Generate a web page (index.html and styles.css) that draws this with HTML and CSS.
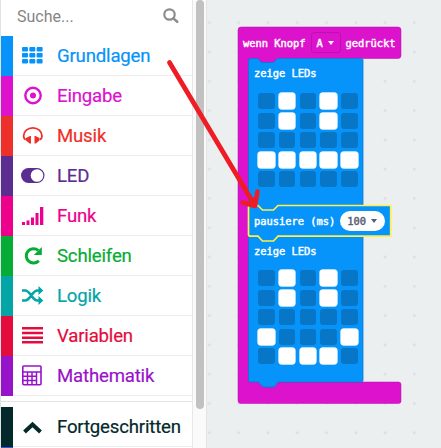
FILE: index.html
```html
<!DOCTYPE html>
<html lang="de">
<head>
<meta charset="utf-8">
<title>Editor</title>
<link rel="stylesheet" href="styles.css">
</head>
<body>
<div class="editor">
  <aside class="toolbox">
    <div class="search"><span>Suche...</span>
      <svg width="16" height="16" viewBox="0 0 16 16" fill="none" stroke="#8c8c8c"><circle cx="6.5" cy="6.5" r="5.2" stroke-width="2.2"/><path d="M10.4 10.4L14.2 13.8" stroke-width="2.5" stroke-linecap="round"/></svg>
    </div>
    <div class="row basic"><i></i><svg viewBox="0 0 24 24" fill="currentColor"><rect x="1" y="3" width="6" height="4.500" rx="1"/><rect x="8.300" y="3" width="6" height="4.500" rx="1"/><rect x="15.600" y="3" width="6" height="4.500" rx="1"/><rect x="1" y="9" width="6" height="4.500" rx="1"/><rect x="8.300" y="9" width="6" height="4.500" rx="1"/><rect x="15.600" y="9" width="6" height="4.500" rx="1"/><rect x="1" y="15" width="6" height="4.500" rx="1"/><rect x="8.300" y="15" width="6" height="4.500" rx="1"/><rect x="15.600" y="15" width="6" height="4.500" rx="1"/></svg><span>Grundlagen</span></div>
    <div class="row input"><i></i><svg viewBox="0 0 24 24"><circle cx="12" cy="11.500" r="7.700" fill="none" stroke="currentColor" stroke-width="2.400"/><circle cx="12" cy="11.500" r="3" fill="currentColor"/></svg><span>Eingabe</span></div>
    <div class="row music"><i></i><svg viewBox="0 0 24 24" fill="currentColor"><path d="M4.700 15.800C2.800 14.500 2.600 13 2.600 12A9.200 8.200 0 0 1 21 12C21 13 20.800 14.500 18.900 15.800" fill="none" stroke="currentColor" stroke-width="1.800"/><path d="M5 14L9 12h1v7.500H8.600L5 16.500zM18.500 14L14.500 12h-1v7.500h1.400L18.500 16.500z"/></svg><span>Musik</span></div>
    <div class="row led"><i></i><svg viewBox="0 0 24 24"><rect x="0" y="4" width="23.500" height="15" rx="7.500" fill="currentColor"/><circle cx="16" cy="11.500" r="6.300" fill="#fff"/></svg><span>LED</span></div>
    <div class="row radio"><i></i><svg viewBox="0 0 24 24" fill="currentColor"><path d="M1 18h3v3H1zM5.500 16.500h3V21h-3zM10 13.500h3V21h-3zM14.500 9h3v12h-3zM19 3h3.300v18H19z"/></svg><span>Funk</span></div>
    <div class="row loops"><i></i><svg viewBox="0 0 24 24"><path d="M17.800 16.700A7.200 7.200 0 1 1 17.300 6.500" fill="none" stroke="currentColor" stroke-width="3"/><path d="M20.800 3v8h-8z" fill="currentColor"/></svg><span>Schleifen</span></div>
    <div class="row logic"><i></i><svg viewBox="0 0 24 24"><path d="M1 6.500H4C9.500 6.500 11 16.500 16.500 16.500h2.500M1 16.500h3C9.500 16.500 11 6.500 16.500 6.500h2.500" fill="none" stroke="currentColor" stroke-width="2.600"/><path d="M17.500 2L22.300 6.500l-4.800 4.500zM17.500 12l4.800 4.500-4.800 4.500z" fill="currentColor"/></svg><span>Logik</span></div>
    <div class="row variables"><i></i><svg viewBox="0 0 24 24" fill="currentColor"><path d="M1 3h21v2.500H1zM1 7.700h21v2.500H1zM1 12.400h21v2.500H1zM1 17.100h21v2.500H1z"/></svg><span>Variablen</span></div>
    <div class="row math"><i></i><svg viewBox="0 0 24 24" fill="none" stroke="currentColor"><rect x="1.800" y="2" width="18.200" height="18.700" rx="1" stroke-width="1.600"/><path d="M2 8h18M2 12.200h14M2 16.400h14M6.500 8v12.500M11 8v12.500M15.500 8v12.500" stroke-width="1.500"/></svg><span>Mathematik</span></div>
    <div class="divider"></div>
    <div class="row advanced"><i></i><svg viewBox="0 0 24 24"><path d="M3.500 17l8-7.500 8 7.500" fill="none" stroke="currentColor" stroke-width="4"/></svg><span>Fortgeschritten</span></div>
    <div class="row next"><i></i></div>
  </aside>
  <div class="track"><div class="thumb"></div></div>
  <main class="workspace">
    <div class="stack">
      <svg class="shapes" width="170" height="384" viewBox="236 24 170 384">
        <path d="M241 27H398a3 3 0 0 1 3 3V55.500a3 3 0 0 1-3 3H280V64H249V382H398.500a2.500 2.500 0 0 1 2.500 2.500V401a2.500 2.500 0 0 1-2.500 2.500H241a3 3 0 0 1-3-3V30a3 3 0 0 1 3-3z" fill="#dc12cd" stroke="#b010a4" stroke-width=".5"/>
        <path d="M251 58.500H258l3.500 4h12l4-4H361.500a1.500 1.500 0 0 1 1.500 1.500V380.500a1.500 1.500 0 0 1-1.500 1.500H278l-2 3q-1 2-3 2H264q-2 0-3-2l-2.500-3H250.500a2 2 0 0 1-2-2V61a2.500 2.500 0 0 1 2.500-2.500z" fill="#0694fa" stroke="#0878cb" stroke-width=".8"/>
        <path d="M250.500 205.500H258l4.500 4.500h11l4.500-4.500H390.700V236.200H278l-4.500 4.800h-11l-4.500-4.800H250.500q-2 0-2-2V207.500q0-2 2-2z" fill="#0694fa" stroke="#fff04a" stroke-width="1.700"/>
      </svg>
      <div class="content">
        <div class="event"><span>wenn Knopf</span><span class="select">A<b></b></span><span>gedrückt</span></div>
        <div class="label">zeige LEDs</div>
        <div class="grid">
          <i></i><i class="on"></i><i></i><i class="on"></i><i></i>
          <i></i><i class="on"></i><i></i><i class="on"></i><i></i>
          <i></i><i></i><i></i><i></i><i></i>
          <i class="on"></i><i class="on"></i><i class="on"></i><i class="on"></i><i class="on"></i>
          <i></i><i></i><i></i><i></i><i></i>
        </div>
        <div class="pause"><span>pausiere (ms)</span><span class="value">100<b></b></span></div>
        <div class="label second">zeige LEDs</div>
        <div class="grid">
          <i></i><i class="on"></i><i></i><i class="on"></i><i></i>
          <i></i><i class="on"></i><i></i><i class="on"></i><i></i>
          <i></i><i></i><i></i><i></i><i></i>
          <i class="on"></i><i></i><i></i><i></i><i class="on"></i>
          <i></i><i class="on"></i><i class="on"></i><i class="on"></i><i></i>
        </div>
      </div>
    </div>
  </main>
  <svg class="arrow" width="441" height="448" viewBox="0 0 441 448" fill="none" stroke="#ee1c24" stroke-linecap="round" stroke-linejoin="round"><path d="M169.500 62.500L254 204" stroke-width="4.800"/><path d="M242.500 202.500L255 206L257.500 191.500" stroke-width="4.500"/><path d="M248 203l6-5 1 7z" fill="#ee1c24" stroke-width="2"/></svg>
</div>
</body>
</html>
```
FILE: styles.css
```css
* { box-sizing: border-box; }
body { margin: 0; }
.editor {
  position: relative;
  display: flex;
  width: 441px;
  height: 448px;
  overflow: hidden;
  background: #ebeff0;
  font-family: Roboto, sans-serif;
}
.toolbox {
  width: 193px;
  height: 448px;
  overflow: hidden;
  background: #fff;
  border-left: 1px solid #dfe5e6;
  border-right: 1px solid #e8e8ea;
}
.search {
  display: flex;
  align-items: center;
  justify-content: space-between;
  height: 36px;
  padding: 0 13px 4px 16px;
  color: #858585;
  font-size: 16px;
}
.row {
  display: flex;
  align-items: center;
  height: 40px;
  background: linear-gradient(#ecedee, #ecedee) 0 39px / 100% 1px no-repeat;
  font-size: 18.6px;
  letter-spacing: -.18px;
  line-height: 24px;
  white-space: nowrap;
}
.row i {
  flex: none;
  width: 12px;
  height: 40px;
  background: currentColor;
}
.row svg { flex: none; width: 24px; height: 24px; margin: 0 12px 0 8px; }
.row span { -webkit-text-stroke: .2px currentColor; }
.basic { color: #0694fa; }
.input { color: #dc12cd; }
.music { color: #ee302b; }
.led { color: #5c2d91; }
.radio { color: #ed008c; }
.loops { color: #05ac35; }
.logic { color: #03a5a7; }
.variables { color: #e30c3d; }
.math { color: #9713c9; }
.advanced { color: #03292b; }
.next { color: #3455db; }
.divider { height: 11px; background: linear-gradient(#e2e3e4, #e2e3e4) 0 5px / 100% 1px no-repeat; }
.track {
  width: 14px;
  padding: 0 3px;
  background: #fafafa;
  border-right: 1px solid #e0e4e5;
}
.thumb { width: 8px; height: 409px; border-radius: 4px; background: #c1c1c1; }
.workspace {
  flex: 1;
  padding: 24px 0 0 29px;
  background: radial-gradient(circle, #dce0e2 0 1.2px, transparent 1.8px) 17px 8px / 29.3px 29.3px #ebeff0;
}
.stack { position: relative; width: 170px; height: 384px; }
.shapes { position: absolute; inset: 0; }
.content {
  position: relative;
  padding-top: 3px;
  color: #fff;
  font: 10.4px/14px "DejaVu Sans Mono", monospace;
  -webkit-text-stroke: .45px currentColor;
  white-space: nowrap;
}
.event { display: flex; align-items: center; height: 31px; padding-left: 7px; }
.select {
  display: flex;
  align-items: center;
  gap: 5px;
  width: 30px;
  height: 21px;
  margin: 0 5px 0 5px;
  padding-left: 5px;
  border: 1px solid #bb12ae;
  border-radius: 3px;
}
b { border: 3.6px solid transparent; border-top: 4px solid currentColor; border-bottom: 0; }
.label { height: 35px; padding: 8px 0 0 18px; }
.grid {
  display: grid;
  grid-template-columns: repeat(5, 16.5px);
  grid-auto-rows: 16px;
  gap: 3.5px 4.3px;
  margin-left: 22px;
}
.grid i { border-radius: 3px; background: #0776c7; }
.grid .on { background: #fff; box-shadow: 0 0 0 .7px #e8f5ff; }
.pause { display: flex; align-items: center; height: 31px; margin-top: 18px; padding-left: 18px; }
.value {
  display: flex;
  align-items: center;
  gap: 5px;
  width: 45px;
  height: 20px;
  margin-left: 5px;
  padding-left: 7px;
  border-radius: 10px;
  background: #fff;
  color: #575e75;
}
.second { height: 34px; }
.arrow { position: absolute; inset: 0; }
```
